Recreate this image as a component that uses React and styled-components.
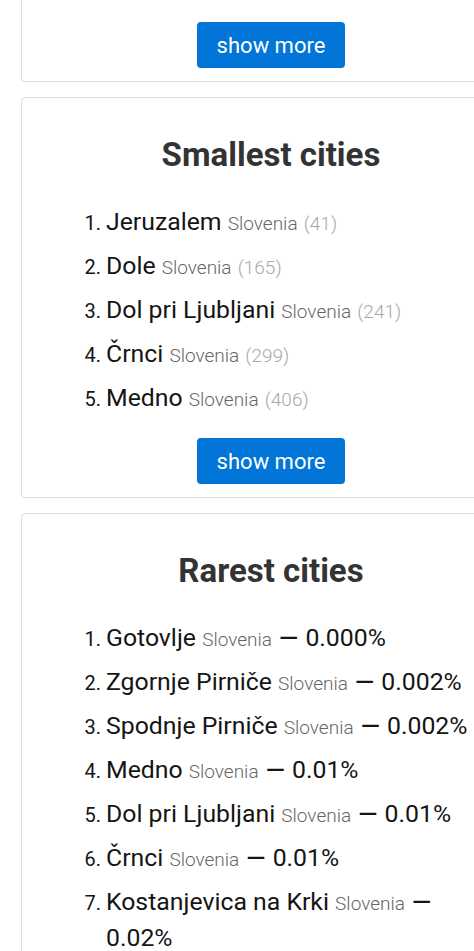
import React from 'react';
import styled, { createGlobalStyle } from 'styled-components';

const Global = createGlobalStyle`
  html, body {
    margin: 0;
    padding: 0;
    background: #fff;
    overflow-x: hidden;
    font-family: Roboto, "Liberation Sans", sans-serif;
  }
`;

const Page = styled.div`
  padding-left: 21px;
  width: 520px;
`;

const Card = styled.section`
  width: 500px;
  box-sizing: border-box;
  background: #fff;
  border: 1px solid #dcdcdc;
  border-top: ${p => (p.$cut ? 'none' : '1px solid #dcdcdc')};
  border-radius: ${p => (p.$cut ? '0 0 4px 4px' : '4px')};
  padding: ${p => (p.$cut ? '22px 20px 13px' : '38px 20px 13px')};
  margin-bottom: 15px;
`;

const Title = styled.h2`
  margin: 0;
  text-align: center;
  font-size: 33px;
  line-height: 38px;
  font-weight: 700;
  color: #333;
`;

const List = styled.ol`
  margin: 30px 0 0;
  padding-left: 64px;
  color: #151515;

  li::marker {
    font-size: 20px;
  }
`;

const Item = styled.li`
  font-size: 24.8px;
  line-height: 36px;
  margin-bottom: 8px;
`;

const Country = styled.span`
  font-size: 19px;
  line-height: 1;
  font-weight: 300;
  color: #666;
`;

const Count = styled.span`
  font-size: 19px;
  line-height: 1;
  font-weight: 300;
  color: #a8a8a8;
`;

const Dash = styled.span`
  padding: 0 1px;
  font-weight: 500;
`;

const Center = styled.div`
  display: flex;
  justify-content: center;
  margin-top: ${p => (p.$flush ? '0' : '22px')};
`;

const Button = styled.button`
  height: 46px;
  padding: 0 20px;
  border: none;
  border-radius: 4px;
  background: #0275d8;
  color: #fff;
  font-family: inherit;
  font-size: 22px;
  cursor: pointer;
`;

const smallest = [
  ['Jeruzalem', 41],
  ['Dole', 165],
  ['Dol pri Ljubljani', 241],
  ['Črnci', 299],
  ['Medno', 406],
];

const rarest = [
  ['Gotovlje', '0.000%'],
  ['Zgornje Pirniče', '0.002%'],
  ['Spodnje Pirniče', '0.002%'],
  ['Medno', '0.01%'],
  ['Dol pri Ljubljani', '0.01%'],
  ['Črnci', '0.01%'],
  ['Kostanjevica na Krki', '0.02%'],
  ['Jeruzalem', '0.02%'],
  ['Dole', '0.03%'],
];

export default function App() {
  return (
    <>
      <Global />
      <Page>
        <Card $cut>
          <Center $flush>
            <Button>show more</Button>
          </Center>
        </Card>

        <Card>
          <Title>Smallest cities</Title>
          <List>
            {smallest.map(([name, n]) => (
              <Item key={name}>
                {name} <Country>Slovenia</Country> <Count>({n})</Count>
              </Item>
            ))}
          </List>
          <Center>
            <Button>show more</Button>
          </Center>
        </Card>

        <Card>
          <Title>Rarest cities</Title>
          <List>
            {rarest.map(([name, pct]) => (
              <Item key={name}>
                {name} <Country>Slovenia</Country> <Dash>—</Dash> {pct}
              </Item>
            ))}
          </List>
          <Center>
            <Button>show more</Button>
          </Center>
        </Card>
      </Page>
    </>
  );
}
